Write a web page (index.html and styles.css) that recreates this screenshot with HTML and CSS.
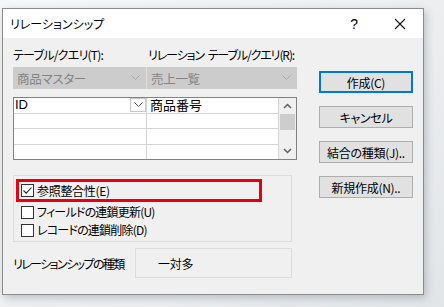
FILE: index.html
```html
<!DOCTYPE html>
<html lang="ja">
<head>
    <meta charset="UTF-8">
    <title>リレーションシップ</title>
    <link rel="stylesheet" href="styles.css">
</head>
<body>
    <div class="dialog">
        <!-- Title bar -->
        <div class="titlebar">
            <span class="title">リレーションシップ</span>
            <span class="help">?</span>
            <span class="close">
                <svg width="12" height="12" viewBox="0 0 12 12"><path d="M1 1 L11 11 M11 1 L1 11" stroke="#111" stroke-width="1.1" fill="none"/></svg>
            </span>
        </div>

        <div class="content">
            <div class="main">
                <div class="labels">
                    <span class="label-left">テーブル/クエリ(T):</span>
                    <span class="label-right">リレーション テーブル/クエリ(R):</span>
                </div>

                <div class="combos">
                    <div class="combo combo-left">
                        <span>商品マスター</span>
                        <svg width="9" height="6" viewBox="0 0 9 6"><path d="M0.5 0.5 L4.5 4.5 L8.5 0.5" stroke="#a8a8a8" fill="none"/></svg>
                    </div>
                    <div class="combo combo-right">
                        <span>売上一覧</span>
                        <svg width="9" height="6" viewBox="0 0 9 6"><path d="M0.5 0.5 L4.5 4.5 L8.5 0.5" stroke="#a8a8a8" fill="none"/></svg>
                    </div>
                </div>

                <div class="grid">
                    <div class="rows">
                        <div class="row">
                            <div class="cell cell-field">
                                <span>ID</span>
                                <span class="cell-drop">
                                    <svg width="9" height="6" viewBox="0 0 9 6"><path d="M0.5 0.5 L4.5 4.5 L8.5 0.5" stroke="#555" fill="none"/></svg>
                                </span>
                            </div>
                            <div class="cell">商品番号</div>
                        </div>
                        <div class="row"><div class="cell"></div><div class="cell"></div></div>
                        <div class="row"><div class="cell"></div><div class="cell"></div></div>
                        <div class="row"><div class="cell"></div><div class="cell"></div></div>
                    </div>
                    <div class="scrollbar">
                        <svg class="arrow" width="9" height="6" viewBox="0 0 9 6"><path d="M1 5 L4.5 1.5 L8 5" stroke="#606060" stroke-width="1.5" fill="none"/></svg>
                        <div class="thumb"></div>
                        <div class="track"></div>
                        <svg class="arrow" width="9" height="6" viewBox="0 0 9 6"><path d="M1 1 L4.5 4.5 L8 1" stroke="#606060" stroke-width="1.5" fill="none"/></svg>
                    </div>
                </div>

                <div class="options">
                    <div class="highlight">
                        <label class="check">
                            <span class="box">
                                <svg width="11" height="11" viewBox="0 0 11 11"><path d="M1.5 5.5 L4.2 8.2 L9.5 2.5" stroke="#222" stroke-width="1.1" fill="none"/></svg>
                            </span>
                            参照整合性(E)
                        </label>
                    </div>
                    <label class="check"><span class="box"></span>フィールドの連鎖更新(U)</label>
                    <label class="check"><span class="box"></span>レコードの連鎖削除(D)</label>
                </div>

                <div class="type-row">
                    <span class="type-label">リレーションシップの種類</span>
                    <div class="type-value">一対多</div>
                </div>
            </div>

            <div class="buttons">
                <button class="btn btn-default">作成(C)</button>
                <button class="btn">キャンセル</button>
                <button class="btn">結合の種類(J)..</button>
                <button class="btn">新規作成(N)..</button>
            </div>
        </div>
    </div>
</body>
</html>
```

FILE: styles.css
```css
* {
    margin: 0;
    padding: 0;
    box-sizing: border-box;
}

body {
    width: 444px;
    height: 307px;
    overflow: hidden;
    background: linear-gradient(135deg, #f6f7f8 0%, #eceef0 60%, #e2e5e8 100%);
    font-family: "Noto Sans CJK JP", "Noto Sans", sans-serif;
    font-size: 12px;
    font-feature-settings: "palt";
    letter-spacing: -0.3px;
    white-space: nowrap;
    color: #000;
    padding: 8px 0 0 2px;
}

.dialog {
    width: 422px;
    height: 287px;
    border: 1px solid #8c8c8c;
    background: #f0f0f0;
    box-shadow: 2px 3px 8px rgba(60, 70, 80, 0.28);
    display: flex;
    flex-direction: column;
}

.titlebar {
    height: 29px;
    background: #fff;
    display: flex;
    align-items: center;
    padding-left: 7px;
}

.title {
    flex: 1;
    line-height: 16px;
    letter-spacing: 0;
}

.help {
    width: 12px;
    text-align: center;
    font-family: "Liberation Sans", sans-serif;
    font-size: 14px;
    margin-right: 34px;
}

.close {
    display: flex;
    margin-right: 17px;
}

.content {
    display: flex;
    padding-left: 10px;
}

.main {
    width: 284px;
    display: flex;
    flex-direction: column;
}

.labels {
    display: flex;
    padding-top: 9px;
    line-height: 16px;
}

.label-left {
    width: 135px;
    flex-shrink: 0;
    letter-spacing: -0.75px;
}

.label-right {
    letter-spacing: -1.1px;
    word-spacing: 2px;
}

.combos {
    display: flex;
    margin-top: 4px;
}

.combo {
    height: 22px;
    background: #cccccc;
    color: #838383;
    display: flex;
    align-items: center;
    justify-content: space-between;
    padding: 0 6px 0 4px;
    font-size: 12.5px;
}

.combo-left {
    width: 134px;
    border-right: 1px solid #dedede;
}

.combo-right {
    width: 150px;
}

.grid {
    margin-top: 8px;
    height: 63px;
    border: 1px solid #828282;
    background: #fff;
    display: flex;
}

.rows {
    flex: 1;
    display: flex;
    flex-direction: column;
}

.row {
    flex: 1;
    display: flex;
    border-bottom: 1px solid #d4d4d4;
}

.row:last-child {
    border-bottom: none;
}

.cell {
    width: 133px;
    border-right: 1px solid #d4d4d4;
    font-size: 13px;
    line-height: 14px;
    letter-spacing: 0;
    padding-left: 3px;
    display: flex;
    align-items: center;
}

.cell:last-child {
    flex: 1;
    width: auto;
}

.cell-field {
    justify-content: space-between;
    padding-left: 1px;
    font-family: "Liberation Sans", sans-serif;
    font-size: 13px;
}

.cell-drop {
    width: 16px;
    height: 14px;
    border: 1px solid #c8c8c8;
    display: flex;
    align-items: center;
    justify-content: center;
}

.scrollbar {
    width: 17px;
    background: #f0f0f0;
    display: flex;
    flex-direction: column;
    align-items: center;
}

.arrow {
    margin: 5px 0;
}

.thumb {
    width: 15px;
    height: 16px;
    background: #cdcdcd;
}

.track {
    flex: 1;
}

.options {
    margin-top: 15px;
    width: 279px;
    height: 67px;
    border: 1px solid #dcdcdc;
    display: flex;
    flex-direction: column;
    padding-top: 3px;
    letter-spacing: -0.8px;
}

.highlight {
    width: 246px;
    height: 23px;
    margin-left: 2px;
    border: 3px solid #e60012;
    display: flex;
    align-items: center;
    padding-left: 2px;
    margin-bottom: 1px;
    letter-spacing: -0.3px;
}

.check {
    display: flex;
    align-items: center;
    height: 18px;
    line-height: 16px;
    padding-left: 7px;
}

.highlight .check {
    padding-left: 0;
}

.box {
    width: 13px;
    height: 13px;
    border: 1px solid #333;
    background: #fff;
    margin-right: 3px;
    display: flex;
    align-items: center;
    justify-content: center;
}

.type-row {
    margin-top: 6px;
    display: flex;
    align-items: center;
}

.type-label {
    width: 122px;
    flex-shrink: 0;
    letter-spacing: -1.6px;
}

.type-value {
    width: 157px;
    height: 30px;
    border: 1px solid #dcdcdc;
    display: flex;
    align-items: center;
    padding-left: 22px;
}

.buttons {
    margin-left: 22px;
    padding-top: 33px;
    display: flex;
    flex-direction: column;
    gap: 13px;
}

.btn {
    width: 94px;
    height: 22px;
    background: #e1e1e1;
    border: 1px solid #adadad;
    font-family: inherit;
    font-size: 12px;
    font-feature-settings: "palt";
    letter-spacing: -0.3px;
    color: #000;
}

.btn-default {
    border: 2px solid #0078d7;
}
```
